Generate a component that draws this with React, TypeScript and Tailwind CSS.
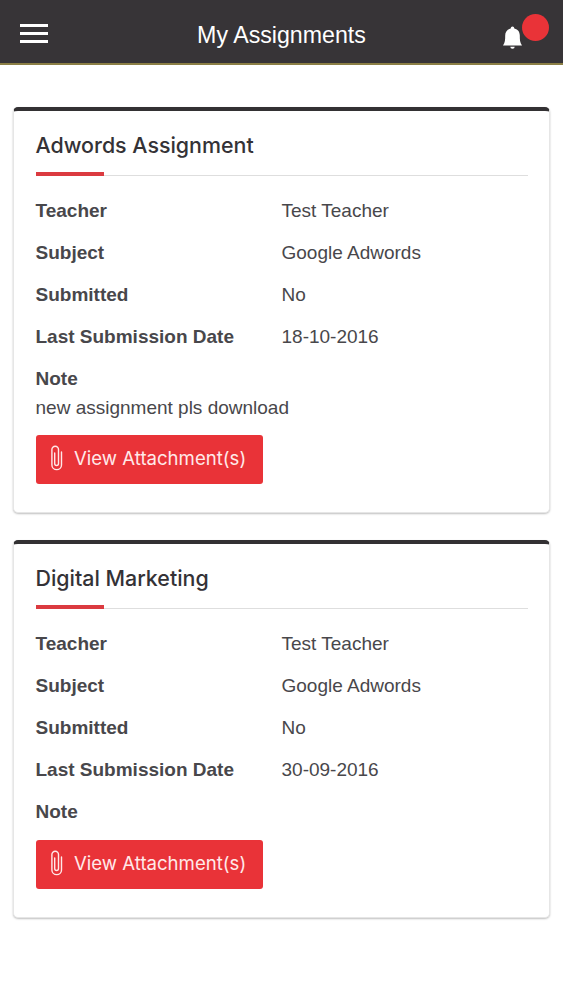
import React from "react";

type Assignment = { title: string; date: string; note: string };

const assignments: Assignment[] = [
  { title: "Adwords Assignment", date: "18-10-2016", note: "new assignment pls download" },
  { title: "Digital Marketing", date: "30-09-2016", note: "" },
];

function Row({ label, value }: { label: string; value: string }) {
  return (
    <div className="flex h-[42px] items-center">
      <span className="w-[246px] font-bold">{label}</span>
      <span>{value}</span>
    </div>
  );
}

function Card({ item }: { item: Assignment }) {
  return (
    <section className="rounded-[5px] border border-t-4 border-[#e6e6e6] border-t-[#333133] bg-white pr-[21px] pb-[28px] pl-[21.5px] shadow-[0_1px_2px_rgba(0,0,0,0.25)]">
      <h2 className="h-[64px] pt-[20px] font-['Inter',sans-serif] text-[21.4px] leading-[28px] font-medium text-[#343236]">{item.title}</h2>
      <div className="h-px w-[492px] bg-[#dedede]">
        <div className="relative -top-[3px] h-[4px] w-[68px] bg-[#db3a40]" />
      </div>
      <div className="pt-[14px] text-[19px] leading-[28px] text-[#48474b]">
        <Row label="Teacher" value="Test Teacher" />
        <Row label="Subject" value="Google Adwords" />
        <Row label="Submitted" value="No" />
        <Row label="Last Submission Date" value={item.date} />
        <Row label="Note" value="" />
        <p className={item.note ? "-mt-[6px] mb-[13px]" : "mb-[7px]"}>{item.note}</p>
      </div>
      <button className="flex h-[49px] w-[227px] items-center rounded-[3px] bg-[#e93338] pl-[15.5px] font-['Inter',sans-serif] text-[18.6px] text-[#ffe9e9]">
        <svg className="-mt-[3px]" width="12" height="26" viewBox="0 0 12 26" fill="none" stroke="currentColor" strokeWidth="1.4" strokeLinecap="round">
          <path d="M3.700 8v10.500a1.900 2 0 0 0 3.800 0V4.500a3.300 3.300 0 0 0-6.600 0V20a4.800 4.600 0 0 0 9.600 0V7" />
        </svg>
        <span className="ml-[11px] -mt-px">View Attachment(s)</span>
      </button>
    </section>
  );
}

export default function App() {
  return (
    <div className="h-[1000px] w-[563px] bg-white font-['Liberation_Sans',sans-serif] text-[#414045]">
      <header className="relative flex h-[65px] items-center justify-center border-b-2 border-[#8b7f45] bg-[#373437] text-white">
        <div className="absolute top-[24px] left-[20px] flex flex-col gap-[5px]">
          <i className="h-[3px] w-[28px] bg-white" />
          <i className="h-[3px] w-[28px] bg-white" />
          <i className="h-[3px] w-[28px] bg-white" />
        </div>
        <h1 className="pt-[8px] text-[23.2px]">My Assignments</h1>
        <svg className="absolute top-[26px] left-[502px]" width="21" height="23" viewBox="0 0 21 23" fill="currentColor">
          <path d="M10.500 0.500C11.600 0.500 12.200 1.300 12.300 2.500C16.200 3.400 17.800 6.200 17.800 9.500C17.800 14 17.900 16.500 20 19.500H1C3.100 16.500 3.200 14 3.200 9.500C3.200 6.200 4.800 3.400 8.700 2.500C8.800 1.300 9.400 0.500 10.500 0.500ZM8.300 20.700h4.400a2.200 2 0 0 1-4.400 0z" />
        </svg>
        <span className="absolute top-[14px] left-[522px] size-[27px] rounded-full bg-[#e93338]" />
      </header>
      <main className="flex flex-col gap-[27px] px-[13px] pt-[42px]">
        {assignments.map((item) => (
          <Card key={item.title} item={item} />
        ))}
      </main>
    </div>
  );
}
